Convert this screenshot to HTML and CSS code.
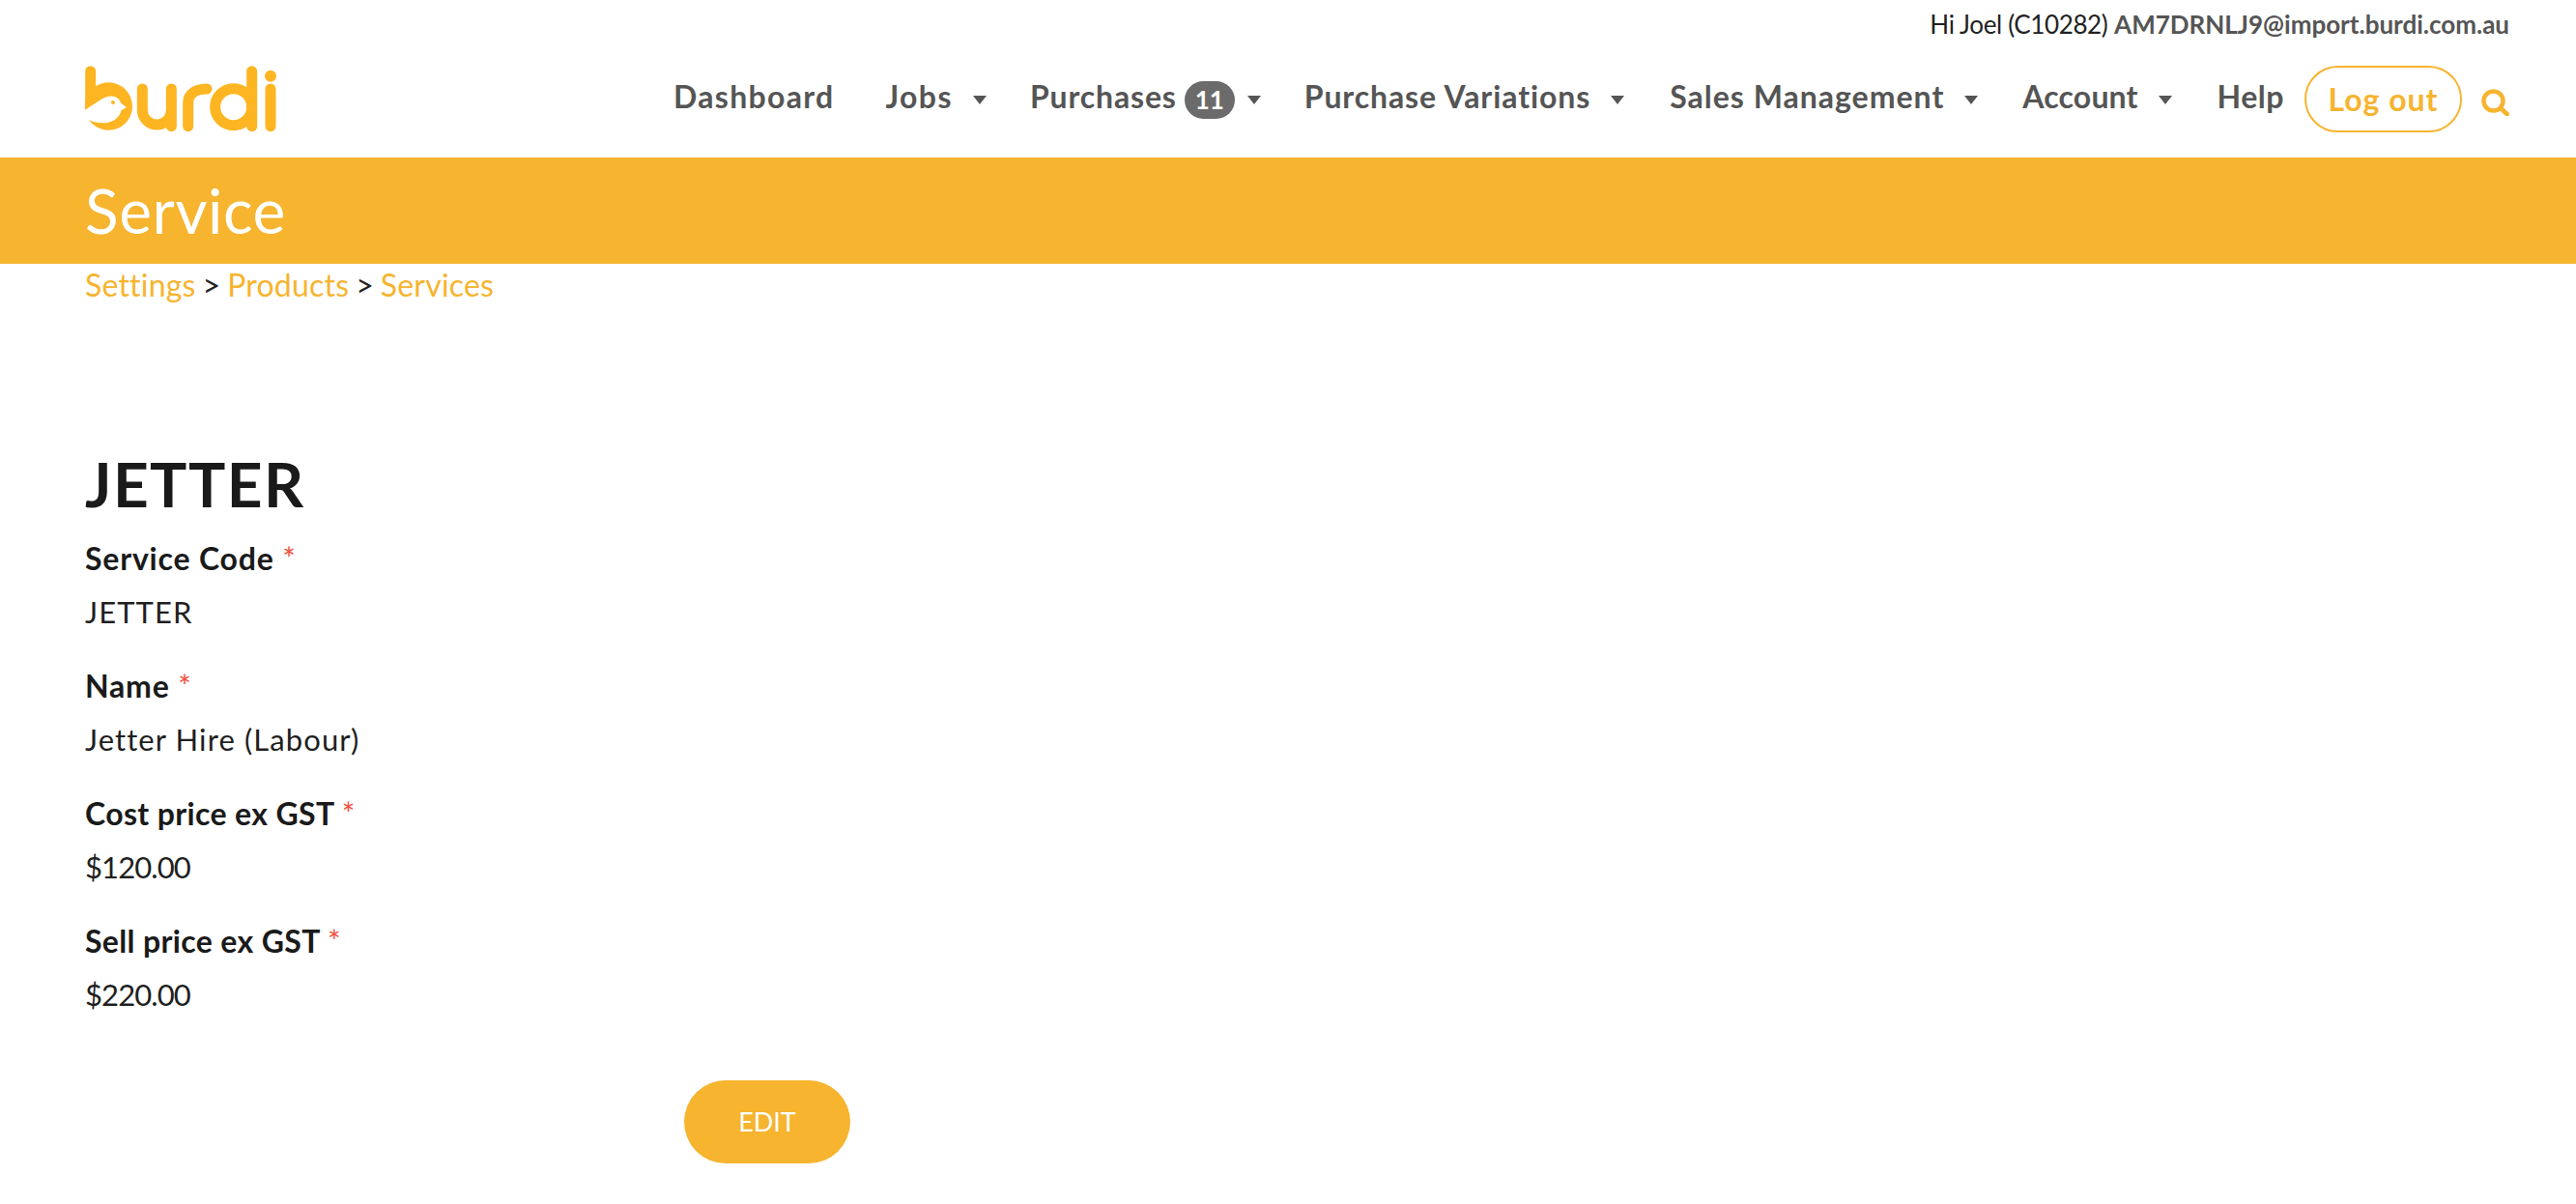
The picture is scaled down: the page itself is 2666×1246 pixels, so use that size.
FILE: index.html
```html
<!DOCTYPE html>
<html lang="en">
<head>
<meta charset="utf-8">
<title>Service</title>
<link rel="stylesheet" href="styles.css">
</head>
<body>
<header class="site-header">
  <div class="user-line"><span class="hi">Hi Joel (C10282)</span> <a class="email">AM7DRNLJ9@import.burdi.com.au</a></div>
  <div class="main-row">
    <svg class="logo" viewBox="84 84 600 210" width="200" height="70" role="img" aria-label="burdi">
      <g fill="none" stroke="#fdb522" stroke-width="33" stroke-linecap="round">
        <path d="M101 101V205"/>
        <path d="M262 156V222A45 45 0 0 0 352 222V156M352 222V272"/>
        <path d="M404 272V200C404 170 430 156 462 156"/>
        <circle cx="545" cy="212" r="57"/>
        <path d="M602 101V272"/>
        <path d="M660 156V272"/>
      </g>
      <circle cx="157" cy="210" r="74" fill="#fdb522"/>
      <circle cx="660" cy="116" r="18" fill="#fdb522"/>
      <path fill="#fff" d="M80 224L135 188C165 170 190 180 195 200L213 213L197 222C190 250 165 262 140 262C125 262 110 260 98 253L80 262Z"/>
      <circle cx="171" cy="198" r="6" fill="#fdb522"/>
    </svg>
    <nav class="nav">
      <a class="nav-item dash">Dashboard</a>
      <a class="nav-item jobs">Jobs<i class="caret"></i></a>
      <a class="nav-item purch">Purchases<span class="badge">11</span><i class="caret"></i></a>
      <a class="nav-item vari">Purchase Variations<i class="caret"></i></a>
      <a class="nav-item sales">Sales Management<i class="caret"></i></a>
      <a class="nav-item acct">Account<i class="caret"></i></a>
      <a class="nav-item help">Help</a>
      <a class="logout">Log out</a>
      <svg class="search" viewBox="0 0 29 28" width="29" height="28" aria-label="Search">
        <circle cx="12.5" cy="12.5" r="10" fill="none" stroke="#f6b42f" stroke-width="4.5"/>
        <path d="M20 20L26.5 26" stroke="#f6b42f" stroke-width="5" stroke-linecap="round"/>
      </svg>
    </nav>
  </div>
</header>
<div class="band"><h1 class="band-title">Service</h1></div>
<div class="crumbs"><a>Settings</a> <span class="sep">&gt;</span> <a>Products</a> <span class="sep">&gt;</span> <a>Services</a></div>
<main class="content">
  <h2 class="record-title">JETTER</h2>
  <div class="field">
    <div class="label">Service Code <span class="req">*</span></div>
    <div class="value">JETTER</div>
  </div>
  <div class="field">
    <div class="label">Name <span class="req">*</span></div>
    <div class="value">Jetter Hire (Labour)</div>
  </div>
  <div class="field">
    <div class="label price">Cost price ex GST <span class="req">*</span></div>
    <div class="value num">$120.00</div>
  </div>
  <div class="field">
    <div class="label price">Sell price ex GST <span class="req">*</span></div>
    <div class="value num">$220.00</div>
  </div>
  <div class="actions"><a class="edit">EDIT</a></div>
</main>
</body>
</html>
```
FILE: styles.css
```css
* { box-sizing: border-box; }
html, body { margin: 0; padding: 0; background: #fff; }
body { font-family: "Lato", "Noto Sans", sans-serif; color: #1a1a1a; overflow: hidden; height: 1246px; }

.site-header { height: 163px; padding: 0 71px 0 88px; }
.user-line { height: 50px; line-height: 50px; text-align: right; font-size: 26px; margin-right: -2px; }
.hi { color: #222; font-weight: 400; letter-spacing: -0.35px; }
.email { color: #555; font-weight: 700; letter-spacing: 0; }

.main-row { display: flex; justify-content: space-between; align-items: center; height: 69px; margin-top: 18px; }
.logo { display: block; flex: none; }

.nav { display: flex; align-items: center; }
.nav-item { display: flex; align-items: center; font-size: 32px; font-weight: 700; color: #555; white-space: nowrap; margin-bottom: 6px; }
.caret { display: block; width: 0; height: 0; border-left: 7.5px solid transparent; border-right: 7.5px solid transparent; border-top: 9px solid #555; margin-left: 21px; margin-top: 8px; }
.badge { display: block; width: 52px; height: 39px; line-height: 39px; margin-left: 8px; margin-top: 8px; border-radius: 20px; background: #6b6b6b; color: #fff; text-align: center; font-size: 26px; letter-spacing: 0; margin-right: -8px; }
.dash { margin-right: 53px; letter-spacing: 1.3px; }
.jobs { margin-right: 45px; letter-spacing: 1.4px; }
.purch { margin-right: 45px; letter-spacing: 0.85px; }
.vari { margin-right: 47px; letter-spacing: 0.9px; }
.sales { margin-right: 46px; letter-spacing: 1px; }
.acct { margin-right: 47px; letter-spacing: 0.15px; }
.help { margin-right: 21px; letter-spacing: 0.5px; }
.logout { display: block; width: 163px; height: 69px; line-height: 65px; border: 2px solid #f6b42f; border-radius: 35px; text-align: center; color: #f6b42f; font-size: 32px; font-weight: 700; letter-spacing: 1px; margin-right: 20px; }
.search { display: block; margin-top: 6px; margin-right: -2px; }

.band { height: 110px; background: #f6b42f; padding: 0 88px; display: flex; align-items: center; }
.band-title { margin: 0; font-size: 64px; font-weight: 400; color: #fff; letter-spacing: 0.6px; line-height: 1; }

.crumbs { padding: 0 88px; height: 44px; line-height: 44px; font-size: 32px; font-weight: 400; color: #222; letter-spacing: 0.2px; word-spacing: -1.5px; }
.crumbs a { color: #f6b42f; }

.content { padding: 0 88px; }
.record-title { margin: 146px 0 11px; font-size: 64px; line-height: 76px; font-weight: 700; color: #1a1a1a; letter-spacing: 1.4px; }
.field { height: 132px; }
.label { height: 56px; line-height: 56px; font-size: 32px; font-weight: 700; color: #1a1a1a; letter-spacing: 0.8px; }
.label.price { letter-spacing: 0.35px; }
.req { color: #f0503c; font-size: 32px; font-weight: 400; vertical-align: 0; line-height: 1; }
.value { line-height: 54px; font-size: 31px; font-weight: 400; color: #1f1f1f; letter-spacing: 1.1px; }
.value.num { letter-spacing: -0.9px; }

.actions { padding-left: 620px; margin-top: 40px; }
.edit { display: block; width: 172px; height: 86px; line-height: 86px; border-radius: 43px; background: #f6b42f; color: #fff; text-align: center; font-size: 27px; font-weight: 400; }
```
